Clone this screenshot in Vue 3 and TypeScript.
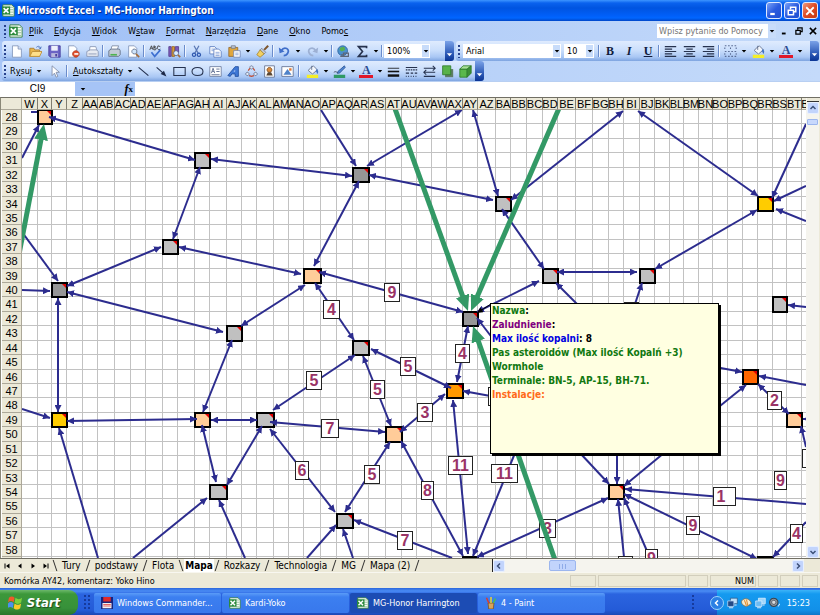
<script setup lang="ts">
import { computed, h, onMounted, onUnmounted, ref, type FunctionalComponent } from 'vue'

/* ---------- icons: [path, fill, stroke, strokeWidth] on a 16 x 16 canvas ---------- */
type Shape = [string, string, string?, number?]

const icons: Record<string, Shape[]> = {
  excel: [
    ['M1 1H12L15 4V15H1Z', '#f4faf2', '#2f7a3c', 1],
    ['M9 4H14M9 7H14M9 10H14M9 13H14', 'none', '#86b68c', 1],
    ['M0 3H10V13H0Z', '#2c8a3c'],
    ['M2 5L8 11M8 5L2 11', 'none', '#fff', 2],
  ],
  blank: [['M3 1H10L14 5V15H3Z', '#fff', '#7f93b8', 1], ['M10 1V5H14', '#d5e0f4', '#7f93b8', 1]],
  open: [
    ['M1 4H6L7 6H13V14H1Z', '#e9b64b', '#a8772a', 1],
    ['M1 14L4 8H16L13 14Z', '#ffe08a', '#b98a33', 1],
    ['M9 3C11 1 13 1 14 4M12 3L14 5L15 2', 'none', '#3c66b5', 1],
  ],
  save: [
    ['M1 1H15V15H3L1 13Z', '#6b63c4', '#40389a', 1],
    ['M4 1H12V7H4Z', '#eef0fb'],
    ['M4 10H12V15H4Z', '#b9b8dc'],
    ['M9 11H11V14H9Z', '#40389a'],
  ],
  permission: [
    ['M2 1H9L12 4V15H2Z', '#fff', '#7f93b8', 1],
    ['M11 7A4 4 0 1 1 10.900 7Z', '#e2502c', '#b03418', 1],
    ['M9 11H14', 'none', '#fff', 2],
  ],
  mail: [
    ['M5 2H12L14 8H4Z', '#fff', '#8592b0', 1],
    ['M1 8L5 6H13L15 8V14H1Z', '#e8ebf2', '#8592b0', 1],
    ['M3 11H13', 'none', '#8592b0', 1],
  ],
  print: [
    ['M5 1H13L11 7H3Z', '#fff', '#76859e', 1],
    ['M1 7L4 5H14L15 7V12L13 14H1Z', '#c4ccd6', '#5f6c82', 1],
    ['M3 11H11V13H3Z', '#4fb34f'],
  ],
  preview: [
    ['M2 1H9L12 4V15H2Z', '#fff', '#7f93b8', 1],
    ['M9 5A3 3 0 1 1 8.900 5Z', '#cfe4fa', '#5b6b88', 1],
    ['M11 11L15 15', 'none', '#a06b3c', 2],
  ],
  spelling: [
    ['M1 6L3 1L5 6M2 4H4M6 1V6H8L9 4L6 3L8 2L6 1M14 2L11 1L10 4L12 6L14 5', 'none', '#3a3a3a', 1],
    ['M3 9L7 14L14 6', 'none', '#3d6fd0', 2],
  ],
  research: [
    ['M1 2H4V14H1Z', '#7d5bb8', '#553a8c', 1],
    ['M5 2H8V14H5Z', '#d99a3c', '#96661c', 1],
    ['M9 2H13V9H9Z', '#7d5bb8', '#553a8c', 1],
    ['M10 7A3 3 0 1 1 9.900 7Z', '#dcecff', '#4d628e', 1],
    ['M12 12L15 15', 'none', '#a06b3c', 2],
  ],
  cut: [
    ['M5 1L10 10M11 1L6 10', 'none', '#5a78b4', 1.5],
    ['M5 10A2 2 0 1 1 4.900 10ZM11 10A2 2 0 1 1 10.900 10Z', 'none', '#2f58ae', 1.5],
  ],
  copy: [
    ['M1 2H7L9 4V11H1Z', '#fff', '#5577bd', 1],
    ['M6 5H12L15 8V15H6Z', '#fff', '#5577bd', 1],
    ['M8 9H13M8 11H13M8 13H13M3 5H6M3 7H6', 'none', '#7e9bd4', 1],
  ],
  paste: [
    ['M1 3H12V14H1Z', '#e0a63d', '#93682a', 1],
    ['M4 1H9V4H4Z', '#c6cbd6', '#6f7788', 1],
    ['M7 7H15V15H7Z', '#fff', '#6f85b5', 1],
    ['M9 10H13M9 12H13', 'none', '#7e9bd4', 1],
  ],
  brush: [
    ['M15 1L10 6', 'none', '#7e552c', 2.5],
    ['M7 4L12 9L10 11L5 6Z', '#c8cdd8', '#717a8c', 1],
    ['M5 6L10 11L5 15L1 12Z', '#f2d063', '#a9852c', 1],
  ],
  undo: [['M4 7C8 1 15 5 12 10C11 12 9 13 7 13', 'none', '#3f6ec9', 2.2], ['M1 3L2 10L8 8Z', '#3f6ec9']],
  redo: [['M12 7C8 1 1 5 4 10C5 12 7 13 9 13', 'none', '#9db0d3', 2.2], ['M15 3L14 10L8 8Z', '#9db0d3']],
  link: [
    ['M7 1A6 6 0 1 1 6.900 1Z', '#4a90cf', '#2d659c', 1],
    ['M4 3L9 2L10 6L6 8L3 6Z', '#58b04f'],
    ['M5 12H9M8 10H14V14H8ZM4 14H9', 'none', '#5d6676', 1.5],
  ],
  sum: [['M13 4V2H3L8 8L3 14H13V12', 'none', '#26324e', 2]],
  left: [['M1 2H15M1 5H10M1 8H15M1 11H10M1 14H15', 'none', '#26324e', 1.5]],
  center: [['M1 2H15M4 5H12M1 8H15M4 11H12M1 14H15', 'none', '#26324e', 1.5]],
  right: [['M1 2H15M6 5H15M1 8H15M6 11H15M1 14H15', 'none', '#26324e', 1.5]],
  border: [
    ['M1 1H3M5 1H7M9 1H11M13 1H15M1 8H3M5 8H7M9 8H11M13 8H15M1 3V5M1 10V12M8 3V5M8 10V12M15 3V5M15 10V12', 'none', '#5a6c94', 1.3],
    ['M1 14H3M5 14H7M9 14H11M13 14H15', 'none', '#5a6c94', 1.3],
  ],
  fill: [
    ['M4 5L9 1L14 6L8 11L3 7Z', '#f3f6fb', '#5b6a88', 1],
    ['M7 1V6', 'none', '#5b6a88', 1],
    ['M13 5C16 7 15 10 14 11L12 7Z', '#3f73c6'],
    ['M1 12H15V16H1Z', '#f4ee2a'],
  ],
  pen: [
    ['M14 1L15 3L8 10L5 10L6 8Z', '#4f86d4', '#2b5390', 1],
    ['M1 9C3 7 5 9 6 10', 'none', '#47505f', 1],
    ['M1 12H15V16H1Z', '#2f9964'],
  ],
  cursor: [['M5 1V13L8 10L10 15L12 14L10 9H14Z', '#fff', '#7a86a2', 1]],
  line: [['M2 3L14 13', 'none', '#1e2a48', 1.3]],
  arrow: [['M2 3L11 11', 'none', '#1e2a48', 1.3], ['M14 14L7 11L11 7Z', '#1e2a48']],
  rect: [['M1 3H15V13H1Z', 'none', '#26324e', 1.3]],
  oval: [['M8 3C17 3 17 13 8 13C-1 13 -1 3 8 3Z', 'none', '#26324e', 1.3]],
  textbox: [
    ['M1 2H15V14H1Z', '#fff', '#66769a', 1],
    ['M3 10L5 4L7 10M4 8H6M9 5H13M9 8H13M3 12H13', 'none', '#4a5b82', 1],
  ],
  wordart: [['M1 13L10 2H14V14H10V11H6L4 14Z', '#3f78d6', '#1f4c9c', 1], ['M8 8L10 6V8Z', '#dbe8ff']],
  diagram: [
    ['M8 1A2 2 0 1 1 7.900 1ZM3 9A2 2 0 1 1 2.900 9ZM13 9A2 2 0 1 1 12.900 9Z', '#e4eaf6', '#5e6c8c', 1],
    ['M4 7L6 4M12 7L10 4M5 13L8 14L11 13', 'none', '#c04a30', 1.5],
  ],
  clipart: [
    ['M2 1H14V15H2Z', '#fff', '#5c6b8e', 1],
    ['M8 3A3 3 0 1 1 7.900 3Z', '#d98a3c', '#7d4a1c', 1],
    ['M4 13L6 9H10L12 13Z', '#5a4632'],
  ],
  picture: [
    ['M1 2H15V14H1Z', '#fff', '#5c6b8e', 1],
    ['M3 12L8 5L13 12Z', '#4f82c8'],
    ['M10 4H13V7H10Z', '#e07a36'],
  ],
  weight: [['M1 4H15', 'none', '#111', 1], ['M1 8H15', 'none', '#111', 2], ['M1 13H15', 'none', '#111', 3]],
  dash: [['M1 3H15M1 6H3M4 6H6M7 6H9M10 6H12M13 6H15M1 10H5M7 10H10M12 10H15M1 14H2M4 14H5M7 14H8M10 14H11M13 14H14', 'none', '#26324e', 1.3]],
  arrows: [['M1 4H15M12 1L15 4L12 7M15 9H1M4 6L1 9L4 12M1 14H15', 'none', '#26324e', 1.3]],
  shadow: [['M5 5H15V15H5Z', '#5f7d66'], ['M2 1H12V12H2Z', '#58b24a', '#2e7a2a', 1]],
  cube: [
    ['M1 5H10V15H1Z', '#5ab84c', '#2c7a2a', 1],
    ['M1 5L5 1H15L10 5Z', '#a9e09a', '#2c7a2a', 1],
    ['M10 5L15 1V10L10 15Z', '#3c8f36', '#2c7a2a', 1],
  ],
  disk: [
    ['M0 0H16V16H0Z', '#1a237c'],
    ['M3 0H13V6H3Z', '#e02a2a'],
    ['M2 8H14V15H2Z', '#f2f2f2'],
    ['M3 10H13M3 12H13', 'none', '#d33', 1],
  ],
  paint: [
    ['M4 8H12L11 16H5Z', '#d8a45a', '#7b4c1c', 1],
    ['M5 8L2 1', 'none', '#e03a2a', 2],
    ['M8 8V0', 'none', '#f0d030', 2],
    ['M11 8L14 2', 'none', '#4fc04a', 2],
  ],
  flag: [
    ['M1 3C3 1 5 1 7 3L6 8C4 6 2 6 0 8Z', '#f0592b'],
    ['M8 3C10 5 13 5 15 3L14 8C12 10 9 10 7 8Z', '#7ed03c'],
    ['M0 9C2 7 4 7 6 9L5 14C3 12 1 13 -1 14Z', '#4c90f0'],
    ['M7 9C9 11 12 11 14 9L13 14C11 16 8 16 6 14Z', '#fbc928'],
  ],
  net: [
    ['M5 1H15V9H5Z', '#bfe0fa', '#27527f', 1],
    ['M1 5H10V13H1Z', '#234a86', '#cfe6ff', 1],
    ['M3 15H9M11 11H14', 'none', '#dbe8f5', 1.5],
  ],
  netOn: [
    ['M5 1H15V9H5Z', '#9fd6fb', '#e8f4ff', 1],
    ['M1 5H10V13H1Z', '#6cbcf4', '#e8f4ff', 1],
    ['M3 15H9M11 11H14', 'none', '#dbe8f5', 1.5],
  ],
  shell: [['M1 5C5 -1 14 2 15 9L8 13C3 12 0 9 1 5Z', '#f3ead0', '#8a6a3a', 1], ['M8 3L10 12M5 4L8 12', 'none', '#e38b2c', 1.5]],
  speaker: [
    ['M7 1A6 6 0 1 1 6.900 1Z', '#8f969e', '#39424d', 1.5],
    ['M7 4A3 3 0 1 1 6.900 4Z', '#d6dade', '#39424d', 1],
    ['M13 13L16 9', 'none', '#cfe6ff', 1.5],
  ],
  minimize: [['M3 12H9', 'none', 'currentColor', 3]],
  restore: [['M6 6V3H13V9H10', 'none', 'currentColor', 2], ['M3 7H10V13H3Z', 'none', 'currentColor', 2]],
  close: [['M3 3L13 13M13 3L3 13', 'none', 'currentColor', 2.4]],
  up: [['M3 10L8 5L13 10', 'none', '#3c5078', 3]],
  down: [['M3 6L8 11L13 6', 'none', '#3c5078', 3]],
  prev: [['M10 3L5 8L10 13', 'none', 'currentColor', 3]],
  next: [['M6 3L11 8L6 13', 'none', 'currentColor', 3]],
  first: [['M4 3V13', 'none', '#000', 2], ['M13 3V13L6 8Z', '#000']],
  back: [['M11 3V13L4 8Z', '#000']],
  forward: [['M5 3V13L12 8Z', '#000']],
  last: [['M12 3V13', 'none', '#000', 2], ['M3 3V13L10 8Z', '#000']],
  caret: [['M2 5H14L8 12Z', '#000']],
}

const Icon: FunctionalComponent<{ name: string }> = (props) =>
  h('svg', { viewBox: '0 0 16 16', 'aria-hidden': 'true' },
    icons[props.name].map(([d, fill, stroke, width]) =>
      h('path', { d, fill, stroke: stroke ?? 'none', 'stroke-width': width ?? 0 })))
Icon.props = ['name']

/* ---------- menus and toolbars ---------- */
const menus = [
  ['', 'P', 'lik'], ['', 'E', 'dycja'], ['', 'W', 'idok'], ['W', 's', 'taw'], ['', 'F', 'ormat'],
  ['', 'N', 'arzędzia'], ['', 'D', 'ane'], ['', 'O', 'kno'], ['Pomo', 'c', ''],
]
const standard = ['blank', 'open', 'save', 'permission', 'mail', '|', 'print', 'preview', '|', 'spelling',
  'research', '|', 'cut', 'copy', 'paste', 'v', 'brush', '|', 'undo', 'v', 'redo', 'v', '|', 'link', 'sum', 'v', '|']
const formatting = ['|', 'B', 'I', 'U', '|', 'left', 'center', 'right', '|', 'border', 'v', 'fill', 'v', 'A', 'v']
const drawing = ['line', 'arrow', 'rect', 'oval', 'textbox', 'wordart', 'diagram', 'clipart', 'picture', '|',
  'fill', 'v', 'pen', 'v', 'A', 'v', 'weight', 'dash', 'arrows', 'shadow', 'cube']
const isLetter = (s: string) => s.length === 1 && 'BIUA'.includes(s)

/* ---------- sheet geometry ---------- */
const LEFT = 22
const TOP = 110
const FIRST_ROW = 28
const ROW_COUNT = 140
const ROW_PITCH = 14.42
const colEdges = [22, 38, 52, 67, 83, 98, 115, 131, 146, 163, 178, 195, 210, 227, 242, 257, 274, 289, 304, 321,
  337, 353, 369, 386, 402, 417, 432, 447, 463, 478, 496, 511, 527, 543, 558, 576, 593, 609, 624, 640, 655, 670,
  684, 699, 713, 728, 743, 758, 773, 787, 802]
while (colEdges.length < 240) colEdges.push(colEdges[colEdges.length - 1] + 15)
const rowEdges = Array.from({ length: ROW_COUNT + 1 }, (_, i) => Math.round(TOP + i * ROW_PITCH))

const colName = (n: number): string =>
  n < 26 ? String.fromCharCode(65 + n) : colName(Math.floor(n / 26) - 1) + String.fromCharCode(65 + (n % 26))
const columns = colEdges.slice(1).map((edge, i) => ({ name: colName(22 + i), start: colEdges[i], width: edge - colEdges[i] }))
const rows = rowEdges.slice(1).map((edge, i) => ({ name: FIRST_ROW + i, start: rowEdges[i], height: edge - rowEdges[i] }))
const mapWidth = colEdges[colEdges.length - 1] - LEFT
const mapHeight = rowEdges[ROW_COUNT] - TOP
const gridPath = colEdges.slice(1).map((x) => `M${x - 0.5} ${TOP}v${mapHeight}`).join('')
  + rowEdges.slice(1).map((y) => `M${LEFT} ${y - 0.5}h${mapWidth}`).join('')

/* only the headings that the window has room for are rendered */
const view = ref({ width: window.innerWidth, height: window.innerHeight })
const measure = () => {
  view.value = { width: window.innerWidth, height: window.innerHeight }
}
onMounted(() => window.addEventListener('resize', measure))
onUnmounted(() => window.removeEventListener('resize', measure))
const shownColumns = computed(() => columns.filter((c) => c.start < view.value.width - 14))
const shownRows = computed(() => rows.filter((r) => r.start + 8 < view.value.height - 57))

/* ---------- star systems ---------- */
const GREY = '#c0c0c0'
const DARK = '#969696'
const PEACH = '#ffcc99'
const GOLD = '#ffcc00'
const systems: [string, number, string][] = [
  ['X', 28, PEACH], ['AH', 31, GREY], ['AR', 32, DARK], ['BA', 34, GREY], ['BR', 34, GOLD], ['AF', 37, GREY],
  ['AO', 39, PEACH], ['BD', 39, GREY], ['BJ', 39, GREY], ['Y', 40, DARK], ['BS', 41, GREY], ['AY', 42, DARK],
  ['AJ', 43, GREY], ['AR', 44, GREY], ['BQ', 46, '#ff6600'], ['AX', 47, '#ff9900'], ['Y', 49, GOLD],
  ['AH', 49, PEACH], ['AL', 49, GREY], ['BT', 49, PEACH], ['AT', 50, PEACH], ['AI', 54, GREY],
  ['BH', 54, PEACH], ['AQ', 56, GREY], ['AY', 59, DARK], ['BR', 59, DARK],
]
const nodes = systems.map(([col, row, color]) => {
  const c = columns.findIndex((k) => k.name === col)
  const r = row - FIRST_ROW
  return {
    id: col + row, color,
    x: colEdges[c], y: rowEdges[r],
    w: colEdges[c + 1] - colEdges[c], h: rowEdges[r + 1] - rowEdges[r],
  }
})

/* x1, y1, x2, y2, heads: 2 both ends, 1 at the second point, 0 none */
const routes: [number, number, number, number, number][] = [
  [49, 117, 195, 160, 2], [22, 158, 39, 125, 1], [31, 112, 37, 112, 0], [211, 159, 352, 176, 2],
  [200, 167, 173, 239, 2], [161, 247, 67, 286, 2], [22, 232, 58, 281, 1], [22, 290, 50, 291, 1],
  [67, 292, 223, 332, 2], [58, 298, 58, 412, 2], [179, 247, 301, 274, 2], [241, 326, 305, 285, 2],
  [22, 409, 50, 418, 1], [232, 340, 203, 412, 2], [67, 421, 197, 419, 2], [211, 420, 257, 420, 2],
  [202, 425, 216, 482, 2], [262, 426, 227, 485, 2], [133, 558, 207, 498, 1], [245, 558, 219, 500, 1],
  [98, 558, 59, 428, 1], [321, 110, 356, 166, 1], [462, 110, 367, 166, 2], [369, 175, 493, 200, 2],
  [473, 110, 498, 196, 2], [511, 200, 623, 111, 2], [502, 209, 544, 269, 2], [359, 181, 314, 266, 2],
  [319, 272, 463, 312, 2], [315, 283, 354, 340, 2], [477, 312, 539, 281, 2], [500, 348, 477, 318, 1],
  [638, 111, 758, 196, 2], [806, 124, 772, 198, 1], [806, 186, 774, 201, 1], [806, 221, 776, 209, 1],
  [757, 210, 655, 269, 2], [557, 272, 637, 272, 2], [580, 307, 556, 283, 1], [634, 307, 642, 283, 1],
  [806, 307, 788, 305, 1], [355, 355, 273, 410, 2], [363, 356, 391, 426, 2], [371, 349, 451, 388, 2],
  [468, 326, 457, 382, 2], [400, 432, 445, 394, 2], [270, 422, 385, 432, 2], [270, 429, 335, 512, 2],
  [390, 442, 345, 512, 2], [401, 441, 463, 556, 2], [453, 400, 468, 554, 2], [515, 453, 473, 556, 1],
  [496, 397, 463, 391, 1], [452, 558, 354, 520, 1], [307, 558, 336, 525, 1], [353, 558, 343, 529, 1],
  [477, 557, 608, 498, 2], [710, 366, 742, 372, 1], [806, 385, 759, 376, 1], [710, 414, 746, 385, 1],
  [758, 384, 789, 414, 2], [808, 419, 803, 419, 1], [806, 447, 801, 426, 1], [580, 453, 609, 484, 1],
  [617, 453, 617, 484, 1], [664, 453, 624, 486, 1], [806, 504, 625, 489, 1], [757, 559, 624, 494, 2],
  [624, 557, 618, 499, 1], [647, 551, 624, 498, 1], [806, 522, 773, 557, 1],
]

/* wormhole shafts stop inside the arrow head so that its tip stays sharp */
const SHAFT_GAP = 10
const wormholes = [[394, 106, 468, 311], [560, 106, 471, 311], [16, 270, 44, 124], [555, 560, 473, 326]]
  .map(([x1, y1, x2, y2]) => {
    const k = SHAFT_GAP / Math.hypot(x2 - x1, y2 - y1)
    return { x1, y1, x2: x2 - (x2 - x1) * k, y2: y2 - (y2 - y1) * k }
  })

const distances: [number, number, number, string][] = [
  [384, 283, 15, '9'], [323, 300, 16, '4'], [306, 371, 15, '5'], [400, 357, 15, '5'], [370, 380, 14, '5'],
  [455, 344, 14, '4'], [417, 403, 15, '3'], [321, 419, 17, '7'], [295, 461, 13, '6'], [364, 465, 15, '5'],
  [421, 481, 12, '8'], [448, 456, 24, '11'], [491, 464, 26, '11'], [397, 531, 15, '7'], [488, 387, 15, ''],
  [539, 519, 16, '3'], [767, 391, 14, '2'], [802, 449, 15, ''], [774, 471, 12, '9'], [713, 487, 22, '1 '],
  [686, 516, 13, '9'], [790, 524, 12, '4'], [645, 549, 12, '9'], [618, 556, 14, ''], [624, 302, 14, ''],
]

const tabs = ['Tury', 'podstawy', 'Flota', 'Mapa', 'Rozkazy', 'Technologia', 'MG', 'Mapa (2)']
const tasks = [
  { icon: 'disk', text: 'Windows Commander...' },
  { icon: 'excel', text: 'Kardi-Yoko' },
  { icon: 'excel', text: 'MG-Honor Harrington', active: true },
  { icon: 'paint', text: '4 - Paint' },
]
</script>

<template>
  <div class="desktop">
    <header class="titlebar">
      <Icon name="excel" class="app-icon" />
      <h1>Microsoft Excel - MG-Honor Harrington</h1>
      <button class="win" aria-label="Minimalizuj"><Icon name="minimize" /></button>
      <button class="win" aria-label="Przywróć"><Icon name="restore" /></button>
      <button class="win win-close" aria-label="Zamknij"><Icon name="close" /></button>
    </header>

    <nav class="menubar">
      <i class="grip"></i>
      <Icon name="excel" class="doc-icon" />
      <button v-for="m in menus" :key="m.join('')" class="menu">{{ m[0] }}<u>{{ m[1] }}</u>{{ m[2] }}</button>
      <div class="help">
        <input type="text" placeholder="Wpisz pytanie do Pomocy" aria-label="Pomoc" />
        <button class="drop" aria-label="Historia pytań"><Icon name="caret" /></button>
      </div>
      <button class="doc-btn" aria-label="Minimalizuj okno"><Icon name="minimize" /></button>
      <button class="doc-btn" aria-label="Przywróć okno"><Icon name="restore" /></button>
      <button class="doc-btn" aria-label="Zamknij okno"><Icon name="close" /></button>
    </nav>

    <div class="toolrow">
      <div class="toolbar standard">
        <i class="grip"></i>
        <template v-for="(t, i) in standard" :key="i">
          <i v-if="t === '|'" class="sep"></i>
          <button v-else-if="t === 'v'" class="drop" aria-label="Więcej"><Icon name="caret" /></button>
          <button v-else class="tool" :aria-label="t"><Icon :name="t" /></button>
        </template>
        <div class="combo zoom">
          <input type="text" value="100%" aria-label="Powiększenie" />
          <button class="drop" aria-label="Lista powiększeń"><Icon name="caret" /></button>
        </div>
        <button class="overflow" aria-label="Opcje paska"><Icon name="caret" /></button>
      </div>
      <div class="toolbar formatting">
        <i class="grip"></i>
        <div class="combo font">
          <input type="text" value="Arial" aria-label="Czcionka" />
          <button class="drop" aria-label="Lista czcionek"><Icon name="caret" /></button>
        </div>
        <div class="combo size">
          <input type="text" value="10" aria-label="Rozmiar" />
          <button class="drop" aria-label="Lista rozmiarów"><Icon name="caret" /></button>
        </div>
        <template v-for="(t, i) in formatting" :key="i">
          <i v-if="t === '|'" class="sep"></i>
          <button v-else-if="t === 'v'" class="drop" aria-label="Więcej"><Icon name="caret" /></button>
          <button v-else-if="isLetter(t)" class="tool letter" :class="'letter-' + t">{{ t }}</button>
          <button v-else class="tool" :aria-label="t"><Icon :name="t" /></button>
        </template>
        <button class="overflow" aria-label="Opcje paska"><Icon name="caret" /></button>
      </div>
    </div>

    <div class="toolrow">
      <div class="toolbar drawing">
        <i class="grip"></i>
        <button class="word">R<u>y</u>suj</button>
        <button class="drop" aria-label="Menu rysowania"><Icon name="caret" /></button>
        <button class="tool pointer" aria-label="Zaznacz obiekty"><Icon name="cursor" /></button>
        <i class="sep"></i>
        <button class="word"><u>A</u>utokształty</button>
        <button class="drop" aria-label="Lista kształtów"><Icon name="caret" /></button>
        <template v-for="(t, i) in drawing" :key="i">
          <i v-if="t === '|'" class="sep"></i>
          <button v-else-if="t === 'v'" class="drop" aria-label="Więcej"><Icon name="caret" /></button>
          <button v-else-if="isLetter(t)" class="tool letter" :class="'letter-' + t">{{ t }}</button>
          <button v-else class="tool" :aria-label="t"><Icon :name="t" /></button>
        </template>
        <button class="overflow" aria-label="Opcje paska"><Icon name="caret" /></button>
      </div>
    </div>

    <div class="formula">
      <input class="namebox" type="text" value="CI9" aria-label="Pole nazwy" />
      <button class="drop" aria-label="Lista nazw"><Icon name="caret" /></button>
      <button class="fx" aria-label="Wstaw funkcję"><i>f</i>x</button>
      <input class="formula-input" type="text" aria-label="Pasek formuły" />
    </div>

    <main class="sheet">
      <div class="pane">
        <div class="col-heads">
          <div class="corner"></div>
          <div v-for="c in shownColumns" :key="c.name" class="col-head" :style="{ width: c.width + 'px' }">{{ c.name }}</div>
        </div>
        <div class="body">
          <div class="row-heads">
            <div v-for="r in shownRows" :key="r.name" class="row-head" :style="{ height: r.height + 'px' }">{{ r.name }}</div>
          </div>
          <div class="canvas">
            <svg class="map" :width="mapWidth" :height="mapHeight" :viewBox="`${LEFT} ${TOP} ${mapWidth} ${mapHeight}`">
              <defs>
                <marker id="head" viewBox="0 0 7 7" refX="7" refY="3.500" markerWidth="7" markerHeight="7" markerUnits="userSpaceOnUse" orient="auto-start-reverse">
                  <path d="M0 0L7 3.500L0 7Z" fill="#2c2c8e" />
                </marker>
                <marker id="bighead" viewBox="0 0 16 14" refX="6" refY="7" markerWidth="16" markerHeight="14" markerUnits="userSpaceOnUse" orient="auto">
                  <path d="M0 0L16 7L0 14Z" fill="#339966" />
                </marker>
                <marker id="pin" viewBox="0 0 6 6" refX="6" refY="3" markerWidth="6" markerHeight="6" markerUnits="userSpaceOnUse" orient="auto">
                  <path d="M0 0L6 3L0 6Z" fill="#000" />
                </marker>
              </defs>
              <path :d="gridPath" class="grid" />
              <g v-for="n in nodes" :key="n.id">
                <rect :x="n.x" :y="n.y" :width="n.w" :height="n.h" :fill="n.color" class="node" />
                <path :d="`M${n.x + n.w - 5} ${n.y + 1}h4v4Z`" fill="#e00000" />
              </g>
              <line
                v-for="(r, i) in routes" :key="'r' + i" class="route"
                :x1="r[0]" :y1="r[1]" :x2="r[2]" :y2="r[3]"
                :marker-start="r[4] === 2 ? 'url(#head)' : undefined"
                :marker-end="r[4] > 0 ? 'url(#head)' : undefined"
              />
              <g v-for="(d, i) in distances" :key="'d' + i">
                <rect :x="d[0] + 0.5" :y="d[1] + 0.5" :width="d[2]" height="18" class="tag" />
                <text v-if="d[3]" :x="d[0] + (d[3] === '1 ' ? 8 : d[2] / 2 + 0.5)" :y="d[1] + 15" class="distance">{{ d[3] }}</text>
              </g>
              <line
                v-for="(w, i) in wormholes" :key="'w' + i" class="wormhole"
                :x1="w.x1" :y1="w.y1" :x2="w.x2" :y2="w.y2" marker-end="url(#bighead)"
              />
              <line x1="491" y1="304" x2="477" y2="313" class="pin" marker-end="url(#pin)" />
            </svg>
            <aside class="comment">
              <p class="green">Nazwa<b>:</b></p>
              <p class="purple">Zaludnienie<b>:</b></p>
              <p class="blue">Max ilość kopalni<b>: 8</b></p>
              <p class="green">Pas asteroidów (Max ilość Kopalń +3)</p>
              <p class="green">Wormhole</p>
              <p class="green">Terminale: BN-5, AP-15, BH-71.</p>
              <p class="orange">Instalacje:</p>
            </aside>
          </div>
        </div>
      </div>
      <div class="vscroll">
        <i class="split"></i>
        <button class="sbtn" aria-label="W górę"><Icon name="up" /></button>
        <i class="vthumb"></i>
        <button class="sbtn" aria-label="W dół"><Icon name="down" /></button>
      </div>
    </main>

    <div class="tabbar">
      <button v-for="n in ['first', 'back', 'forward', 'last']" :key="n" class="nav" :aria-label="n"><Icon :name="n" /></button>
      <svg class="slash" viewBox="0 0 6 14" aria-hidden="true"><path d="M1 1L5 13" /></svg>
      <template v-for="t in tabs" :key="t">
        <button class="tab" :class="{ active: t === 'Mapa' }">{{ t }}</button>
        <svg class="slash" viewBox="0 0 6 14" aria-hidden="true"><path :d="t === 'Flota' ? 'M1 1L5 13' : 'M5 1L1 13'" /></svg>
      </template>
      <div class="hscroll">
        <button class="sbtn" aria-label="W lewo"><Icon name="prev" /></button>
        <div class="htrack"><i class="hthumb"></i></div>
        <button class="sbtn" aria-label="W prawo"><Icon name="next" /></button>
      </div>
    </div>

    <footer class="status">
      <span class="message">Komórka AY42, komentarz: Yoko Hino</span>
      <span class="cell c26"></span><span class="cell c88"></span><span class="cell c20"></span>
      <span class="cell c46">NUM</span><span class="cell c20"></span><span class="cell c20"></span><span class="cell c16"></span>
    </footer>

    <div class="taskbar">
      <button class="start"><Icon name="flag" />Start</button>
      <i class="dots"></i>
      <button v-for="t in tasks" :key="t.text" class="task" :class="{ active: t.active }"><Icon :name="t.icon" /><span>{{ t.text }}</span></button>
      <i class="dots end"></i>
      <div class="tray">
        <button class="expand" aria-label="Pokaż ukryte ikony"><Icon name="prev" /></button>
        <Icon name="net" /><Icon name="shell" /><Icon name="netOn" /><Icon name="speaker" />
        <time>15:23</time>
      </div>
    </div>
  </div>
</template>

<style>
body {
  margin: 0;
}
</style>

<style scoped>
.desktop {
  display: flex;
  flex-direction: column;
  height: 100vh;
  overflow: hidden;
  background: #ece9d8;
  color: #000;
  font: 9px/12px "DejaVu Sans Condensed", "DejaVu Sans", Tahoma, sans-serif;
}
.desktop * {
  box-sizing: border-box;
}
button, input {
  margin: 0;
  padding: 0;
  border: 0;
  border-radius: 0;
  background: none;
  color: inherit;
  font: inherit;
  min-width: 0;
}
button {
  display: flex;
  align-items: center;
  justify-content: center;
  flex: none;
}
svg {
  display: block;
  flex: none;
}

.titlebar {
  display: flex;
  align-items: center;
  flex: none;
  gap: 2px;
  height: 21px;
  padding: 0 2px;
  background: linear-gradient(#3d95ff 0, #0a62ee 3px, #0054e0 8px, #0060fa 16px, #0066ff 18px, #0046c8 21px);
}
.app-icon {
  width: 13px;
  height: 13px;
}
.titlebar h1 {
  flex: 1;
  margin: 0;
  color: #fff;
  font: bold 10px/14px "DejaVu Sans Condensed", "DejaVu Sans", sans-serif;
  text-shadow: 1px 1px #0a2f8c;
  white-space: nowrap;
}
.win {
  width: 16px;
  height: 17px;
  border: 1px solid #dfe9ff;
  border-radius: 3px;
  background: linear-gradient(135deg, #7aa2f7, #2a5be0 50%, #1f4fd0);
  color: #fff;
}
.win svg {
  width: 12px;
  height: 12px;
}
.win-close {
  background: linear-gradient(135deg, #f09a80, #dd4a24 50%, #c23a14);
}

.menubar {
  display: flex;
  align-items: center;
  flex: none;
  gap: 11px;
  height: 20px;
  padding: 0 2px 0 4px;
  background: linear-gradient(90deg, #a0c0f6, #c4dafa);
}
.grip {
  flex: none;
  width: 2px;
  height: 13px;
  background: repeating-linear-gradient(#27418c 0 2px, transparent 2px 4px);
}
.doc-icon {
  width: 14px;
  height: 14px;
  margin: 0 -5px 0 -8px;
}
.menu {
  height: 14px;
}
.help {
  display: flex;
  width: 119px;
  height: 14px;
  margin-left: auto;
  background: #fff;
}
.help input {
  flex: 1;
  padding: 0 2px;
}
.help input::placeholder {
  color: #757575;
  opacity: 1;
}
.help .drop {
  background: #c8dcfa;
}
.doc-btn {
  width: 10px;
}
.doc-btn + .doc-btn {
  margin-left: -7px;
}
.help + .doc-btn {
  margin-left: -7px;
}
.doc-btn svg {
  width: 10px;
  height: 10px;
}

.drop {
  width: 8px;
}
.drop svg {
  width: 6px;
  height: 6px;
}

.toolrow {
  display: flex;
  flex: none;
  gap: 2px;
  height: 20px;
  padding: 0 1px 0 2px;
  background: linear-gradient(90deg, #a8c6f7, #c4dafa);
}
.toolbar {
  display: flex;
  align-items: center;
  gap: 1px;
  height: 20px;
  padding-left: 2px;
  border-radius: 3px;
  background: linear-gradient(#dfebfe, #cbdffc 45%, #a9c7f4 80%, #7ea4e0);
}
.tool {
  width: 18px;
  height: 18px;
}
.tool svg {
  width: 13px;
  height: 13px;
}
.sep {
  flex: none;
  width: 2px;
  height: 12px;
  border-left: 1px solid #6a8ccb;
  border-right: 1px solid #f1f6ff;
}
.standard {
  flex: none;
  width: 452px;
}
.formatting {
  flex: 1;
  min-width: 0;
}
.combo {
  display: flex;
  flex: none;
  min-width: 0;
  height: 14px;
  background: #fff;
}
.combo input {
  flex: 1;
  width: 0;
  padding: 0 3px;
}
.combo .drop {
  width: 9px;
  background: #c8dcfa;
  border: 1px solid #fff;
}
.zoom {
  width: 46px;
}
.font {
  flex: 1;
  margin-left: 2px;
}
.size {
  width: 30px;
  margin: 0 3px 0 2px;
}
.overflow {
  align-items: flex-end;
  width: 9px;
  height: 20px;
  margin-left: auto;
  padding-bottom: 3px;
  border-radius: 0 3px 3px 0;
  background: linear-gradient(#7ba2e8, #2f5cb8 60%, #0a3494);
}
.formatting .overflow {
  margin-left: 5px;
}
.overflow svg {
  width: 7px;
  height: 7px;
  filter: invert(1);
}
.letter {
  font: bold 12px/14px "Liberation Serif", serif;
  color: #101c3c;
}
.letter-I {
  font-style: italic;
}
.letter-U {
  text-decoration: underline;
}
.letter-A {
  width: 14px;
  height: 14px;
  margin: 0 2px;
  border: solid #e0182a;
  border-width: 0 0 3px;
  color: #2a4a90;
}
.drawing {
  gap: 0;
}
.drawing .sep {
  margin: 0 3px 0 2px;
}
.drawing .word {
  padding: 0 2px;
}
.drawing .grip {
  margin-right: 2px;
}
.drawing .pointer {
  margin: 0 1px 0 2px;
}
.drawing .drop {
  width: 9px;
}
.drawing .overflow {
  margin-left: 1px;
}

.formula {
  display: flex;
  flex: none;
  height: 16px;
  border-top: 1px solid #b8cff2;
  background: #fff;
}
.namebox {
  width: 75px;
  height: 14px;
  text-align: center;
  font: 10px/14px "Liberation Sans", Arial, sans-serif;
}
.formula .drop {
  width: 16px;
  height: 14px;
  background: #a6c4f6;
}
.fx {
  justify-content: flex-end;
  width: 44px;
  height: 14px;
  padding-right: 2px;
  background: #a6c4f6;
  font: bold 9px/14px "Liberation Serif", serif;
}
.fx i {
  font-size: 12px;
}
.formula-input {
  flex: 1;
  height: 14px;
}

.sheet {
  display: flex;
  flex: 1;
  min-height: 0;
  border-left: 1px solid #8a8878;
  border-top: 1px solid #716f64;
  padding-right: 1px;
}
.pane {
  display: flex;
  flex-direction: column;
  flex: 1;
  min-width: 0;
  overflow: hidden;
  background: #fff;
}
.col-heads {
  display: flex;
  flex: none;
  height: 12px;
  background: #ece9d8;
  font: 11px/12px "Liberation Sans", Arial, sans-serif;
}
.corner {
  flex: none;
  width: 21px;
  border-right: 1px solid #aca899;
  border-bottom: 1px solid #aca899;
}
.col-head {
  display: flex;
  justify-content: center;
  flex: none;
  border-right: 1px solid #807d70;
  border-bottom: 1px solid #aca899;
}
.body {
  display: flex;
  flex: 1;
  min-height: 0;
  overflow: hidden;
}
.row-heads {
  flex: none;
  width: 21px;
  background: #ece9d8;
  border-left: 1px solid #fff;
  border-right: 1px solid #aca899;
  font: 11px/14px "Liberation Sans", Arial, sans-serif;
  text-align: center;
}
.row-head {
  border-bottom: 1px solid #aca899;
}
.canvas {
  position: relative;
  flex: 1;
  min-width: 0;
  overflow: hidden;
}
.grid {
  stroke: #c2c2c2;
  stroke-width: 1;
  fill: none;
}
.node {
  stroke: #000;
  stroke-width: 2;
}
.route {
  stroke: #2c2c8e;
  stroke-width: 2;
}
.wormhole {
  stroke: #339966;
  stroke-width: 5;
}
.tag {
  fill: #fff;
  stroke: #222;
  stroke-width: 1;
}
.distance {
  fill: #993366;
  font: bold 16px "Liberation Sans", Arial, sans-serif;
  text-anchor: middle;
}
.pin {
  stroke: #000;
  stroke-width: 1;
}
.comment {
  position: absolute;
  left: 468px;
  top: 193px;
  width: 229px;
  height: 151px;
  padding-left: 1px;
  border: 1px solid #000;
  background: #ffffe1;
  box-shadow: 2px 2px #000;
  font-size: 10px;
  font-weight: bold;
  line-height: 14px;
  white-space: nowrap;
}
.comment p {
  margin: 0;
}
.comment b {
  color: #000;
}
.green {
  color: #107810;
}
.purple {
  color: #800080;
}
.blue {
  color: #0000e0;
}
.orange {
  color: #ff6a1a;
}

.vscroll {
  display: flex;
  flex-direction: column;
  align-items: center;
  flex: none;
  width: 13px;
  background: #f5f4ee;
}
.split {
  width: 12px;
  height: 4px;
  border-bottom: 1px solid #333;
  background: #ece9d8;
}
.sbtn {
  width: 12px;
  height: 12px;
  border: 1px solid #e8f0ff;
  border-radius: 2px;
  background: #c2d4fc;
  color: #3c5078;
}
.sbtn svg {
  width: 8px;
  height: 8px;
}
.vthumb {
  width: 11px;
  height: 6px;
  margin: 5px 0 auto;
  border: 1px solid #9cb6ee;
  border-radius: 1px;
  background: #c8d8fc;
}

.tabbar {
  display: flex;
  align-items: center;
  flex: none;
  height: 14px;
  border-top: 1px solid #716f64;
  background: #ece9d8;
  font-size: 10px;
}
.nav {
  width: 13px;
}
.nav svg {
  width: 8px;
  height: 8px;
}
.slash {
  width: 6px;
  height: 13px;
  fill: none;
  stroke: #222;
  stroke-width: 1;
}
.tab {
  height: 13px;
  padding: 0 4px;
  white-space: nowrap;
}
.tab.active {
  padding: 0 1px;
  background: #fff;
  font-weight: bold;
}
.hscroll {
  display: flex;
  align-items: center;
  width: 312px;
  margin: 0 16px 0 auto;
  height: 13px;
  border-left: 1px solid #222;
  background: #f5f4ee;
}
.htrack {
  flex: 1;
  padding-left: 44px;
}
.hthumb {
  display: block;
  width: 27px;
  height: 11px;
  border: 1px solid #9cb6ee;
  border-radius: 2px;
  background: repeating-linear-gradient(90deg, #8fabe8 0 1px, transparent 1px 3px) 9px 3px / 8px 5px no-repeat, #c2d4fc;
}

.status {
  display: flex;
  align-items: center;
  flex: none;
  gap: 2px;
  height: 16px;
  padding: 0 2px 0 4px;
  border-top: 1px solid #f8f7f0;
}
.message {
  flex: 1;
}
.cell {
  height: 12px;
  border: 1px solid #d2cebc;
  line-height: 10px;
  text-align: right;
  padding-right: 1px;
}
.c16 {
  width: 16px;
}
.c20 {
  width: 20px;
}
.c26 {
  width: 26px;
}
.c46 {
  width: 46px;
}
.c88 {
  width: 88px;
}

.taskbar {
  display: flex;
  align-items: center;
  flex: none;
  gap: 1px;
  height: 27px;
  background: linear-gradient(#2a66dc 0, #4a8cf4 3px, #2b64e0 6px, #245bd8 22px, #1c48b4 27px);
  color: #fff;
}
.start {
  gap: 4px;
  align-self: flex-end;
  width: 78px;
  height: 25px;
  padding-right: 10px;
  border-radius: 0 9px 9px 0;
  background: linear-gradient(#6cb86a 0, #3c983a 4px, #37913a 18px, #2a762c 25px);
  font: italic bold 13px/16px "DejaVu Sans Condensed", "DejaVu Sans", sans-serif;
  text-shadow: 1px 1px 1px #1c4a1c;
}
.start svg {
  width: 15px;
  height: 15px;
}
.dots {
  flex: none;
  width: 6px;
  height: 16px;
  margin: 2px 3px 0 5px;
  background: repeating-linear-gradient(#163a9c 0 2px, transparent 2px 4px);
  clip-path: polygon(0 0, 2px 0, 2px 100%, 4px 100%, 4px 0, 6px 0, 6px 100%, 0 100%);
}
.dots.end {
  width: 2px;
  margin: 2px 22px 0 auto;
}
.task {
  justify-content: flex-start;
  flex: 0 1 127px;
  gap: 4px;
  height: 20px;
  margin-top: 3px;
  padding-left: 7px;
  border-radius: 2px;
  background: linear-gradient(#5b9cf8, #3c7ff0 4px, #3878ec);
  white-space: nowrap;
}
.task.active {
  background: #1c4cb4;
}
.task svg {
  width: 12px;
  height: 12px;
}
.tray {
  display: flex;
  align-items: center;
  gap: 3px;
  width: 103px;
  height: 25px;
  margin-top: 2px;
  padding-right: 10px;
  background: linear-gradient(#3cb4f8 0, #149af0 4px, #1290e8 20px, #0d76c8 25px);
}
.tray svg {
  width: 11px;
  height: 12px;
}
.tray time {
  margin-left: auto;
}
.expand {
  width: 14px;
  height: 14px;
  margin-left: -7px;
  border: 1px solid #9cd4fb;
  border-radius: 50%;
  background: #2a80e4;
}
.tray .expand svg {
  width: 8px;
  height: 8px;
}
</style>
